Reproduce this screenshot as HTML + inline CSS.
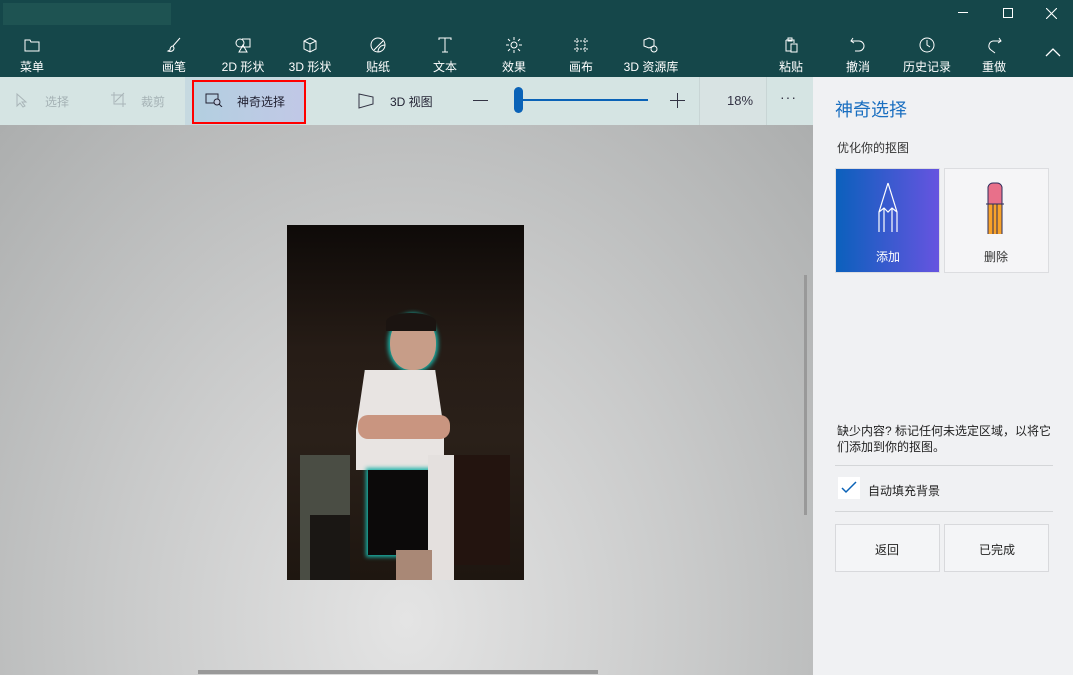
<!DOCTYPE html>
<html><head><meta charset="utf-8"><style>
*{margin:0;padding:0;box-sizing:border-box}
body{width:1073px;height:675px;overflow:hidden;position:relative;font-family:"Liberation Sans","Noto Sans CJK SC",sans-serif;background:#ccc}
.top{position:absolute;left:0;top:0;width:1073px;height:77px;background:#15474a}
.tb{position:absolute;top:30px;width:60px;text-align:center;color:#fff;font-size:12px}
.tb svg{display:block;margin:6px auto 4px;width:18px;height:18px}
.bar{position:absolute;left:0;top:77px;width:813px;height:48px;background:#d5e4e3}
.canvas{position:absolute;left:0;top:125px;width:813px;height:550px;background:radial-gradient(ellipse at 50% 90%,#e4e4e4 0%,#c9caca 50%,#acaeae 100%)}
.panel{position:absolute;left:813px;top:77px;width:260px;height:598px;background:#f0f1f3}
.t{position:absolute;font-size:12px;color:#333}
</style></head><body>
<div class="top">
<div style="position:absolute;left:3px;top:3px;width:168px;height:22px;background:#1e5352"></div>
<div style="position:absolute;left:958px;top:12px;width:10px;height:1px;background:#fff"></div>
<div style="position:absolute;left:1003px;top:8px;width:10px;height:10px;border:1px solid #fff"></div>
<svg style="position:absolute;left:1046px;top:8px" width="11" height="11" stroke="#fff" stroke-width="1.1"><path d="M0 0l11 11M11 0L0 11"/></svg>
<div class="tb" style="left:2px"><svg viewBox="0 0 18 18" fill="none" stroke="#fff"><path d="M2 4h5l1 2h8v9H2z"/></svg>菜单</div>
<div class="tb" style="left:144px"><svg viewBox="0 0 18 18" fill="none" stroke="#fff"><path d="M15 2L8 10M8 10c-2 0-3 2-3 4l-2 1c3 1 6 0 6-3z"/></svg>画笔</div>
<div class="tb" style="left:213px"><svg viewBox="0 0 18 18" fill="none" stroke="#fff"><circle cx="6" cy="7" r="4"/><path d="M8 3h8v8h-8M9 9l-4 7h8z"/></svg>2D 形状</div>
<div class="tb" style="left:280px"><svg viewBox="0 0 18 18" fill="none" stroke="#fff"><path d="M9 2l6 3v8l-6 3-6-3V5zM3 5l6 3 6-3M9 8v8"/></svg>3D 形状</div>
<div class="tb" style="left:348px"><svg viewBox="0 0 18 18" fill="none" stroke="#fff"><circle cx="9" cy="9" r="7"/><path d="M5 14l9-9M9 16c0-4 3-7 7-7"/></svg>贴纸</div>
<div class="tb" style="left:415px"><svg viewBox="0 0 18 18" fill="none" stroke="#fff"><path d="M3 4V2h12v2M9 2v14M6 16h6"/></svg>文本</div>
<div class="tb" style="left:484px"><svg viewBox="0 0 18 18" fill="none" stroke="#fff"><circle cx="9" cy="9" r="3"/><path d="M9 1v3M9 14v3M1 9h3M14 9h3M3 3l2 2M13 13l2 2M3 15l2-2M13 5l2-2"/></svg>效果</div>
<div class="tb" style="left:551px"><svg viewBox="0 0 18 18" fill="none" stroke="#fff"><path d="M5 2v14M13 2v14M2 5h14M2 13h14" stroke-dasharray="2 1"/></svg>画布</div>
<div class="tb" style="left:611px;width:80px"><svg viewBox="0 0 18 18" fill="none" stroke="#fff"><path d="M7 2l5 2v6l-5 2-5-2V4z"/><circle cx="12" cy="13" r="3"/></svg>3D 资源库</div>
<div class="tb" style="left:761px"><svg viewBox="0 0 18 18" fill="none" stroke="#fff"><path d="M4 4h8v3M4 4v11h5M9 8h6v8H9zM6 2h4v3H6z"/></svg>粘贴</div>
<div class="tb" style="left:828px"><svg viewBox="0 0 18 18" fill="none" stroke="#fff"><path d="M4 2L2 5l3 2M2 5h8a5 5 0 0 1 0 10H6"/></svg>撤消</div>
<div class="tb" style="left:897px"><svg viewBox="0 0 18 18" fill="none" stroke="#fff"><circle cx="9" cy="9" r="7"/><path d="M9 4v5l3 2"/></svg>历史记录</div>
<div class="tb" style="left:964px"><svg viewBox="0 0 18 18" fill="none" stroke="#fff"><path d="M14 2l2 3-3 2M16 5H8a5 5 0 0 0-2 9l4 3"/></svg>重做</div>
<svg style="position:absolute;left:1044px;top:46px" width="18" height="12" fill="none" stroke="#fff" stroke-width="1.3"><path d="M2 10l7-7 7 7"/></svg>
</div>
<div class="bar">
<svg style="position:absolute;left:15px;top:15px" width="14" height="16" fill="none" stroke="#a9b5b8"><path d="M2 2v12l3-3 3 4 2-1-3-4h4z"/></svg>
<div class="t" style="left:45px;top:16px;color:#a5b2b5">选择</div>
<svg style="position:absolute;left:110px;top:14px" width="18" height="18" fill="none" stroke="#a9b5b8"><path d="M4 1v12h12M1 4h12v12M14 2L5 11"/></svg>
<div class="t" style="left:141px;top:16px;color:#a5b2b5">裁剪</div>
<div style="position:absolute;left:185px;top:0;width:115px;height:48px;background:#c6d9e0"></div>
<div style="position:absolute;left:192px;top:3px;width:114px;height:44px;border:2px solid #f00;background:linear-gradient(90deg,#b3cfe0,#c1c8e6)"></div>
<svg style="position:absolute;left:205px;top:16px" width="18" height="14" fill="none" stroke="#223"><rect x="1" y="1" width="12" height="9"/><circle cx="12" cy="9" r="3" fill="#c0cbe0"/><path d="M14 11l3 3"/></svg>
<div class="t" style="left:237px;top:16px;color:#223">神奇选择</div>
<svg style="position:absolute;left:357px;top:15px" width="18" height="18" fill="none" stroke="#334"><path d="M2 2l14 3v7l-14 4z"/></svg>
<div class="t" style="left:390px;top:16px;color:#223">3D 视图</div>
<div style="position:absolute;left:473px;top:23px;width:15px;height:1px;background:#334"></div>
<div style="position:absolute;left:518px;top:22px;width:130px;height:2px;background:#0a62b7"></div>
<div style="position:absolute;left:514px;top:10px;width:9px;height:26px;border-radius:5px;background:#0a62b7"></div>
<div style="position:absolute;left:670px;top:23px;width:15px;height:1px;background:#334"></div>
<div style="position:absolute;left:677px;top:16px;width:1px;height:15px;background:#334"></div>
<div style="position:absolute;left:699px;top:0;width:68px;height:48px;border-left:1px solid #c8d5d5;border-right:1px solid #c8d5d5;background:#d8e3e3"></div>
<div class="t" style="left:727px;top:16px;color:#334;font-size:13px">18%</div>
<div class="t" style="left:780px;top:12px;color:#334;font-size:14px;letter-spacing:1px">···</div>
</div>
<div class="canvas">
<div style="position:absolute;left:287px;top:100px;width:237px;height:355px;background:linear-gradient(#0e0a08,#261c16 35%,#2a2019 60%,#1e1610)"></div>
<div style="position:absolute;left:300px;top:330px;width:50px;height:125px;background:#4a4d44"></div>
<div style="position:absolute;left:310px;top:390px;width:40px;height:65px;background:#1a1714"></div>
<div style="position:absolute;left:450px;top:330px;width:60px;height:110px;background:#23140f"></div>
<div style="position:absolute;left:390px;top:190px;width:46px;height:55px;border-radius:50% 50% 45% 45%;background:#c79d88;box-shadow:0 0 4px 2px #1ab3a8"></div>
<div style="position:absolute;left:386px;top:188px;width:50px;height:18px;border-radius:50% 50% 0 0;background:#1b1411"></div>
<div style="position:absolute;left:356px;top:245px;width:88px;height:100px;background:#e8e4e2;box-shadow:0 0 4px 2px #1ab3a8;clip-path:polygon(10% 0,90% 0,100% 60%,100% 100%,0 100%,0 60%)"></div>
<div style="position:absolute;left:358px;top:290px;width:92px;height:24px;border-radius:10px;background:#c99580"></div>
<div style="position:absolute;left:368px;top:345px;width:66px;height:85px;background:#0c0a0a;box-shadow:0 0 4px 2px #1ab3a8"></div>
<div style="position:absolute;left:428px;top:330px;width:26px;height:125px;background:#e4e0de"></div>
<div style="position:absolute;left:396px;top:425px;width:36px;height:30px;background:#a98876"></div>
<div style="position:absolute;left:804px;top:150px;width:3px;height:240px;background:#999"></div>
<div style="position:absolute;left:198px;top:545px;width:400px;height:4px;background:#999"></div>
</div>
<div class="panel">
<div class="t" style="left:22px;top:19px;font-size:18px;color:#1a6fc0">神奇选择</div>
<div class="t" style="left:24px;top:62px;color:#333">优化你的抠图</div>
<div style="position:absolute;left:22px;top:91px;width:105px;height:105px;border:1px solid #dcdde0;background:linear-gradient(90deg,#0b60bc,#6654e0)"></div>
<svg style="position:absolute;left:64px;top:105px" width="22" height="52" fill="none" stroke="#fff" stroke-width="1.2"><path d="M11 1L2 30v20M11 1l9 29v20M2 30l5-4 4 4 4-4 5 4M7 26v24M15 26v24"/></svg>
<div class="t" style="left:63px;top:171px;color:#fff">添加</div>
<div style="position:absolute;left:131px;top:91px;width:105px;height:105px;border:1px solid #dcdde0;background:#f5f5f7"></div>
<svg style="position:absolute;left:170px;top:105px" width="24" height="52"><path d="M5 5a5 5 0 0 1 5-4h4a5 5 0 0 1 5 4v17H5z" fill="#e8708a" stroke="#2a2c5a"/><rect x="5" y="22" width="14" height="30" fill="#f8a22a"/><path d="M3 22h18M10 22v30M14 22v30M5 22v30M19 22v30" stroke="#2a2c5a"/></svg>
<div class="t" style="left:171px;top:171px;color:#333">删除</div>
<div class="t" style="left:24px;top:346px;line-height:16px;width:220px;color:#222">缺少内容? 标记任何未选定区域，以将它们添加到你的抠图。</div>
<div style="position:absolute;left:22px;top:388px;width:218px;height:1px;background:#d4d6d8"></div>
<div style="position:absolute;left:25px;top:400px;width:22px;height:22px;background:#fff"></div>
<svg style="position:absolute;left:28px;top:404px" width="16" height="14" fill="none" stroke="#0a62b7" stroke-width="1.5"><path d="M1 7l4 4 10-10"/></svg>
<div class="t" style="left:55px;top:405px;color:#222">自动填充背景</div>
<div style="position:absolute;left:22px;top:434px;width:218px;height:1px;background:#d4d6d8"></div>
<div style="position:absolute;left:22px;top:447px;width:105px;height:48px;border:1px solid #d8d9dc;background:#f4f5f7"></div>
<div class="t" style="left:62px;top:464px;color:#222">返回</div>
<div style="position:absolute;left:131px;top:447px;width:105px;height:48px;border:1px solid #d8d9dc;background:#f4f5f7"></div>
<div class="t" style="left:166px;top:464px;color:#222">已完成</div>
</div>
</body></html>
